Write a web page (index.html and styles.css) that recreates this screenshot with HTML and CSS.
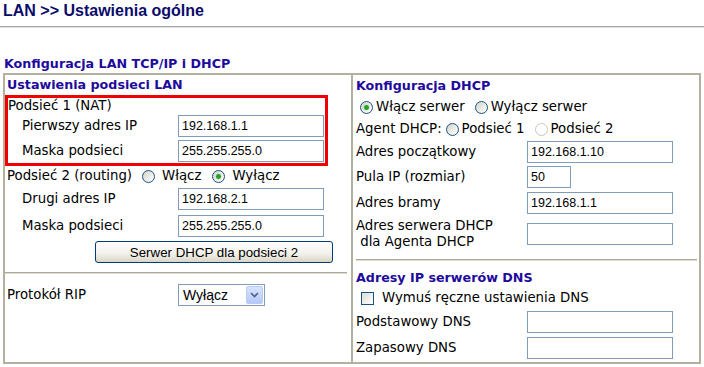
FILE: index.html
```html
<!DOCTYPE html>
<html lang="pl">
<head>
    <meta charset="UTF-8">
    <title>LAN &gt;&gt; Ustawienia ogólne</title>
    <link rel="stylesheet" href="styles.css">
</head>
<body>
    <h1 class="page-title">LAN &gt;&gt; Ustawienia ogólne</h1>
    <div class="title-rule"></div>

    <h2 class="section-title">Konfiguracja LAN TCP/IP i DHCP</h2>

    <div class="config-box">
        <!-- LAN subnets -->
        <div class="col col-left">
            <div class="col-head">Ustawienia podsieci LAN</div>

            <div class="nat-box">
                <div class="nat-line">Podsieć 1 (NAT)</div>
                <div class="field field-26">
                    <span class="label">Pierwszy adres IP</span>
                    <input class="text" type="text" value="192.168.1.1">
                </div>
                <div class="field field-24">
                    <span class="label">Maska podsieci</span>
                    <input class="text" type="text" value="255.255.255.0">
                </div>
            </div>

            <div class="option-row opts-wide">
                <span>Podsieć 2 (routing)</span>
                <label class="opt"><input class="radio" type="radio" name="sub2">Włącz</label>
                <label class="opt"><input class="radio" type="radio" name="sub2" checked>Wyłącz</label>
            </div>
            <div class="field field-26 indent">
                <span class="label">Drugi adres IP</span>
                <input class="text" type="text" value="192.168.2.1">
            </div>
            <div class="field field-27 indent">
                <span class="label">Maska podsieci</span>
                <input class="text" type="text" value="255.255.255.0">
            </div>
            <div class="button-row">
                <button class="button" type="button">Serwer DHCP dla podsieci 2</button>
            </div>

            <div class="separator sep-left"></div>

            <div class="rip-row">
                <span class="rip-label">Protokół RIP</span>
                <div class="select">
                    <span class="select-value">Wyłącz</span>
                    <span class="select-arrow">
                        <svg width="9" height="6" viewBox="0 0 9 6"><path d="M1 1 L4.5 4.5 L8 1" fill="none" stroke="#4d6185" stroke-width="1.6"/></svg>
                    </span>
                </div>
            </div>
        </div>

        <!-- DHCP -->
        <div class="col col-right">
            <div class="col-head head-21">Konfiguracja DHCP</div>
            <div class="option-row row-22">
                <label class="opt first"><input class="radio" type="radio" name="dhcp" checked>Włącz serwer</label>
                <label class="opt"><input class="radio" type="radio" name="dhcp">Wyłącz serwer</label>
            </div>
            <div class="option-row row-22">
                <span>Agent DHCP:</span>
                <label class="opt near"><input class="radio" type="radio" name="agent">Podsieć 1</label>
                <label class="opt"><input class="radio" type="radio" name="agent" disabled>Podsieć 2</label>
            </div>
            <div class="field field-24">
                <span class="label">Adres początkowy</span>
                <input class="text" type="text" value="192.168.1.10">
            </div>
            <div class="field field-26">
                <span class="label">Pula IP (rozmiar)</span>
                <input class="text short" type="text" value="50">
            </div>
            <div class="field field-26">
                <span class="label">Adres bramy</span>
                <input class="text" type="text" value="192.168.1.1">
            </div>
            <div class="field field-35">
                <span class="label">Adres serwera DHCP<br>&nbsp;dla Agenta DHCP</span>
                <input class="text" type="text" value="">
            </div>

            <div class="separator sep-right"></div>

            <div class="col-head dns-head">Adresy IP serwerów DNS</div>
            <div class="check-row">
                <input class="check" type="checkbox">
                <span>Wymuś ręczne ustawienia DNS</span>
            </div>
            <div class="field field-29">
                <span class="label">Podstawowy DNS</span>
                <input class="text" type="text" value="">
            </div>
            <div class="field field-23">
                <span class="label">Zapasowy DNS</span>
                <input class="text" type="text" value="">
            </div>
        </div>
    </div>
</body>
</html>
```

FILE: styles.css
```css
body {
    margin: 0;
    font-family: "DejaVu Sans", Verdana, sans-serif;
    font-size: 13.3px;
    line-height: 16px;
    color: #000;
    background: #fff;
}
.page-title {
    margin: 0;
    padding: 1px 0 0 3px;
    font: bold 16px/19px "Liberation Sans", Arial, sans-serif;
    color: #0b0b6b;
}
.title-rule {
    margin-top: 6px;
    border-top: 1px solid #a3a3a3;
    border-bottom: 1px solid #e2e2e2;
}
.section-title {
    margin: 28px 0 1px;
    padding-left: 4px;
    font-size: 12.7px;
    line-height: 16px;
    font-weight: bold;
    color: #1e0a9c;
}
.config-box {
    margin-left: 3px;
    width: 698px;
    box-sizing: border-box;
    border: 2px solid #b3b0a0;
    display: grid;
    grid-template-columns: 346px 348px;
}
.col-right {
    border-left: 2px solid #b3b0a0;
    padding-left: 3px;
    padding-bottom: 3px;
}
.col-head {
    height: 20px;
    display: flex;
    align-items: center;
    padding-left: 2px;
    font-size: 12.7px;
    font-weight: bold;
    color: #1e0a9c;
}
.col-right .col-head {
    padding-left: 0;
}
.head-21 {
    height: 21px;
}
.dns-head {
    height: 16px;
    padding-top: 9px;
    padding-bottom: 3px;
}
.nat-box {
    width: 323px;
    box-sizing: border-box;
    border: 3px solid #f00000;
}
.nat-line {
    height: 15px;
    line-height: 15px;
}
.field {
    display: flex;
    align-items: center;
}
.col-left .field .label {
    width: 156px;
    padding-left: 14px;
    flex: none;
}
.col-left .indent .label {
    padding-left: 17px;
}
.col-right .field .label {
    width: 171px;
    flex: none;
}
.field-23 { height: 23px; }
.field-24 { height: 24px; }
.field-26 { height: 26px; }
.field-27 { height: 27px; }
.field-29 { height: 29px; }
.field-35 { height: 35px; }
.text {
    width: 146px;
    height: 22px;
    box-sizing: border-box;
    margin: 0;
    padding: 0 3px;
    border: 1px solid #7f9db9;
    font: 12.5px "Liberation Sans", Arial, sans-serif;
    color: #000;
    background: #fff;
}
.text.short {
    width: 44px;
}
.option-row {
    height: 20px;
    display: flex;
    align-items: center;
    padding-left: 2px;
}
.col-right .option-row {
    padding-left: 0;
}
.row-22 {
    height: 22px;
}
.opt {
    display: inline-flex;
    align-items: center;
    gap: 3px;
    margin-left: 10px;
}
.opt.first {
    margin-left: 4px;
}
.opt.near {
    margin-left: 4px;
}
.opts-wide .opt {
    gap: 7px;
}
.opts-wide .opt:nth-child(3) {
    margin-left: 11px;
}
.radio {
    appearance: none;
    -webkit-appearance: none;
    width: 13px;
    height: 13px;
    margin: 0;
    border: 1px solid #1c5180;
    border-radius: 50%;
    background: linear-gradient(135deg, #d4d4cc, #ffffff);
    box-sizing: border-box;
}
.radio:checked {
    background: radial-gradient(circle, #2ca02c 0 2px, #7fcf7f 2.5px, transparent 3.2px),
                linear-gradient(135deg, #d4d4cc, #ffffff);
}
.radio:disabled {
    border-color: #cac8bb;
    background: #fff;
}
.check-row {
    height: 18px;
    display: flex;
    align-items: center;
}
.check {
    appearance: none;
    -webkit-appearance: none;
    width: 13px;
    height: 13px;
    margin: 0 8px 0 5px;
    border: 1px solid #1c5180;
    background: linear-gradient(135deg, #dcdcd4, #ffffff);
    box-sizing: border-box;
}
.button-row {
    height: 26px;
    display: flex;
    align-items: center;
}
.button {
    margin: 0 0 0 90px;
    width: 238px;
    height: 22px;
    padding: 0;
    border: 1px solid #003c74;
    border-radius: 3px;
    background: linear-gradient(#ffffff, #f1f0ea 60%, #d9d5c8);
    font: 13.3px "Liberation Sans", Arial, sans-serif;
    color: #000;
}
.separator {
    height: 0;
    border-top: 1px solid #aca899;
    border-bottom: 1px solid #dedbd0;
}
.sep-left {
    margin: 7px 4px 0 0;
}
.sep-right {
    margin: 8px 2px 0 0;
}
.rip-row {
    margin-top: 10px;
    height: 22px;
    display: flex;
    align-items: center;
    padding-left: 2px;
}
.rip-label {
    width: 171px;
}
.select {
    width: 87px;
    height: 22px;
    box-sizing: border-box;
    border: 1px solid #7f9db9;
    display: flex;
    align-items: center;
    padding: 1px;
}
.select-value {
    flex: 1;
    padding-left: 3px;
    font: 14px "Liberation Sans", Arial, sans-serif;
}
.select-arrow {
    width: 17px;
    height: 18px;
    display: flex;
    align-items: center;
    justify-content: center;
    border: 1px solid #b9cbf3;
    box-sizing: border-box;
    border-radius: 2px;
    background: linear-gradient(#d8e3fd, #b5c8f7);
}
```
